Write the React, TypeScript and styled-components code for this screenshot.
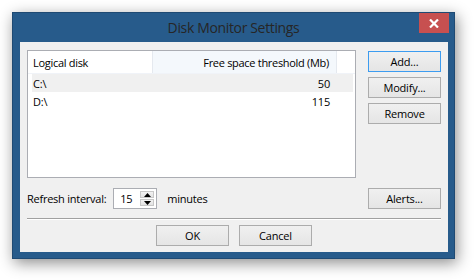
import React from "react";
import styled, { createGlobalStyle } from "styled-components";

const Global = createGlobalStyle`
  html, body { margin: 0; padding: 0; background: #ffffff; }
  body { font-family: "Open Sans", "Noto Sans", sans-serif; font-size: 11px; color: #000; }
  * { box-sizing: border-box; }
`;

const Page = styled.div`
  width: 476px;
  height: 280px;
  padding: 12px 0 0 12px;
`;

const Window = styled.div`
  width: 443px;
  height: 247px;
  background: #275b8b;
  border: 1px solid #1f4a73;
  box-shadow: 2px 4px 14px rgba(0, 0, 0, 0.45);
  display: flex;
  flex-direction: column;
`;

const TitleBar = styled.div`
  height: 29px;
  display: grid;
  grid-template-columns: 1fr auto 1fr;
  align-items: start;
`;

const Title = styled.div`
  grid-column: 2;
  font-size: 14px;
  line-height: 18px;
  margin-top: 6px;
  color: #262626;
  letter-spacing: -0.35px;
`;

const CloseButton = styled.div`
  grid-column: 3;
  justify-self: end;
  width: 30px;
  height: 20px;
  margin-right: 5px;
  background: #c75050;
  display: flex;
  align-items: center;
  justify-content: center;
`;

const Client = styled.div`
  flex: 1;
  margin: 0 6px 6px 7px;
  background: #f0f0f0;
  padding: 8px 7px 5px 7px;
  display: flex;
  flex-direction: column;
`;

const TopSection = styled.div`
  display: flex;
  gap: 12px;
`;

const ListBox = styled.div`
  width: 329px;
  height: 128px;
  background: #fff;
  border: 1px solid #abadb3;
  display: flex;
  flex-direction: column;
`;

const HeaderRow = styled.div`
  height: 23px;
  display: flex;
  border-bottom: 1px solid #f0f3f8;
`;

const HeaderCell = styled.div<{ $w: number; $right?: boolean; $hot?: boolean }>`
  width: ${(p) => p.$w}px;
  padding: 0 7px 0 5px;
  display: flex;
  align-items: center;
  justify-content: ${(p) => (p.$right ? "flex-end" : "flex-start")};
  background: ${(p) => (p.$hot ? "#f4f8fc" : "#fff")};
  border-right: 1px solid #e5e9ef;
  letter-spacing: -0.3px;
`;

const Row = styled.div<{ $shade?: boolean }>`
  height: 18px;
  margin: 0 2px 0 4px;
  display: flex;
  align-items: center;
  background: ${(p) => (p.$shade ? "#f0f0f0" : "transparent")};
`;

const Cell = styled.div<{ $w: number; $right?: boolean }>`
  width: ${(p) => p.$w}px;
  padding: 0 7px 0 1px;
  text-align: ${(p) => (p.$right ? "right" : "left")};
  letter-spacing: -0.2px;
`;

const ButtonColumn = styled.div`
  display: flex;
  flex-direction: column;
  gap: 5px;
  padding-top: 1px;
`;

const Button = styled.div<{ $default?: boolean }>`
  width: 73px;
  height: 21px;
  border: 1px solid ${(p) => (p.$default ? "#3c9cf0" : "#acacac")};
  background: linear-gradient(#f0f0f0, #e5e5e5);
  display: flex;
  align-items: center;
  justify-content: center;
  letter-spacing: -0.2px;
  color: #000;
`;

const BottomRow = styled.div`
  display: flex;
  align-items: center;
  justify-content: space-between;
  margin-top: 10px;
`;

const IntervalGroup = styled.div`
  display: flex;
  align-items: center;
  letter-spacing: -0.25px;
`;

const Label = styled.span`
  padding-left: 0px;
`;

const SpinBox = styled.div`
  width: 44px;
  height: 21px;
  border: 1px solid #abadb3;
  background: #fff;
  display: flex;
  align-items: center;
  padding: 2px 2px 2px 6px;
  margin: 0 10px 0 7px;
`;

const SpinValue = styled.span`
  flex: 1;
`;

const SpinButtons = styled.div`
  width: 14px;
  height: 100%;
  display: flex;
  flex-direction: column;
  gap: 1px;
`;

const SpinArrow = styled.div`
  flex: 1;
  background: linear-gradient(#f2f2f2, #e3e3e3);
  border: 1px solid #c7c7c7;
  display: flex;
  align-items: center;
  justify-content: center;
`;

const Separator = styled.div`
  height: 2px;
  margin: 9px 0 0 0;
  border-top: 1px solid #a0a0a0;
  border-bottom: 1px solid #ffffff;
`;

const DialogButtons = styled.div`
  display: flex;
  justify-content: center;
  gap: 10px;
  margin-top: 5px;
`;

const headers = { disk: "Logical disk", free: "Free space threshold (Mb)" };
const rows = [
  { disk: "C:\\", free: "50" },
  { disk: "D:\\", free: "115" },
];

export default function App() {
  return (
    <Page>
      <Global />
      <Window>
        <TitleBar>
          <Title>Disk Monitor Settings</Title>
          <CloseButton>
            <svg width="10" height="9" viewBox="0 0 10 9">
              <path d="M1 0.5 L9 8.5 M9 0.5 L1 8.5" stroke="#fff" strokeWidth="2.2" />
            </svg>
          </CloseButton>
        </TitleBar>
        <Client>
          <TopSection>
            <ListBox>
              <HeaderRow>
                <HeaderCell $w={125}>{headers.disk}</HeaderCell>
                <HeaderCell $w={184} $right $hot>
                  {headers.free}
                </HeaderCell>
              </HeaderRow>
              {rows.map((r, i) => (
                <Row key={r.disk} $shade={i === 0}>
                  <Cell $w={121}>{r.disk}</Cell>
                  <Cell $w={184} $right>
                    {r.free}
                  </Cell>
                </Row>
              ))}
            </ListBox>
            <ButtonColumn>
              <Button $default>Add...</Button>
              <Button>Modify...</Button>
              <Button>Remove</Button>
            </ButtonColumn>
          </TopSection>
          <BottomRow>
            <IntervalGroup>
              <Label>Refresh interval:</Label>
              <SpinBox>
                <SpinValue>15</SpinValue>
                <SpinButtons>
                  <SpinArrow>
                    <svg width="7" height="4" viewBox="0 0 7 4">
                      <path d="M0 4 L3.5 0 L7 4 Z" fill="#000" />
                    </svg>
                  </SpinArrow>
                  <SpinArrow>
                    <svg width="7" height="4" viewBox="0 0 7 4">
                      <path d="M0 0 L3.5 4 L7 0 Z" fill="#000" />
                    </svg>
                  </SpinArrow>
                </SpinButtons>
              </SpinBox>
              <span>minutes</span>
            </IntervalGroup>
            <Button>Alerts...</Button>
          </BottomRow>
          <Separator />
          <DialogButtons>
            <Button>OK</Button>
            <Button>Cancel</Button>
          </DialogButtons>
        </Client>
      </Window>
    </Page>
  );
}
